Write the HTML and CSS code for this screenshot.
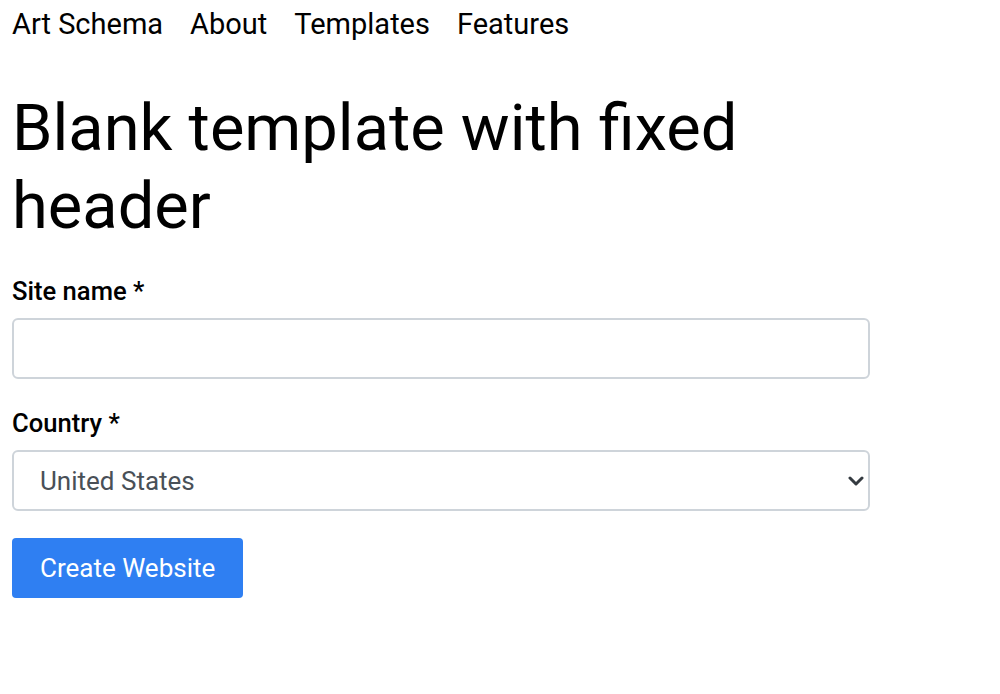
FILE: index.html
```html
<!DOCTYPE html>
<html lang="en">
<head>
    <meta charset="UTF-8">
    <meta name="viewport" content="width=device-width, initial-scale=1.0">
    <title>Blank template with fixed header</title>
    <link rel="stylesheet" href="styles.css">
</head>
<body>
    <nav class="topnav">
        <a class="brand" href="#">Art Schema</a>
        <a href="#">About</a>
        <a href="#">Templates</a>
        <a href="#">Features</a>
    </nav>

    <main class="content">
        <h1>Blank template with fixed header</h1>

        <form class="site-form">
            <div class="field">
                <label for="siteName">Site name *</label>
                <input type="text" id="siteName" class="control">
            </div>

            <div class="field">
                <label for="country">Country *</label>
                <div class="select-wrap">
                    <select id="country" class="control select">
                        <option>United States</option>
                        <option>Canada</option>
                        <option>United Kingdom</option>
                    </select>
                    <svg class="chevron" width="16" height="10" viewBox="0 0 16 10">
                        <path d="M2 2l6 6 6-6" fill="none" stroke="#343a40" stroke-width="3" stroke-linecap="round" stroke-linejoin="round"/>
                    </svg>
                </div>
            </div>

            <button type="button" class="btn-primary">Create Website</button>
        </form>
    </main>
</body>
</html>
```

FILE: styles.css
```css
body {
    font-family: Roboto, "Noto Sans", Arial, sans-serif;
    margin: 0;
    padding: 0 12px;
    color: #000;
    background: #fff;
}
.topnav {
    display: flex;
    gap: 27px;
    height: 48px;
    align-items: center;
    font-size: 29px;
}
.topnav a {
    color: #000;
    text-decoration: none;
}
.content {
    max-width: 858px;
}
h1 {
    font-size: 65px;
    font-weight: 400;
    line-height: 78px;
    margin: 41px 0 30px;
}
.field {
    display: flex;
    flex-direction: column;
    gap: 10px;
    margin-bottom: 28px;
}
.field label {
    font-size: 25.6px;
    font-weight: 500;
    line-height: 33px;
}
.control {
    box-sizing: border-box;
    width: 100%;
    height: 61px;
    border: 2px solid #ced4da;
    border-radius: 6px;
    background: #fff;
    font-family: inherit;
    font-size: 26px;
    color: #495057;
    padding: 0 26px;
}
.select-wrap {
    position: relative;
}
.select {
    appearance: none;
    -webkit-appearance: none;
}
.chevron {
    position: absolute;
    right: 6px;
    top: 26px;
    pointer-events: none;
}
.btn-primary {
    height: 60px;
    padding: 0 28px;
    margin-top: -1px;
    background-color: #2f7ff2;
    color: #fff;
    border: none;
    border-radius: 4px;
    font-family: inherit;
    font-size: 26px;
    cursor: pointer;
}
```
